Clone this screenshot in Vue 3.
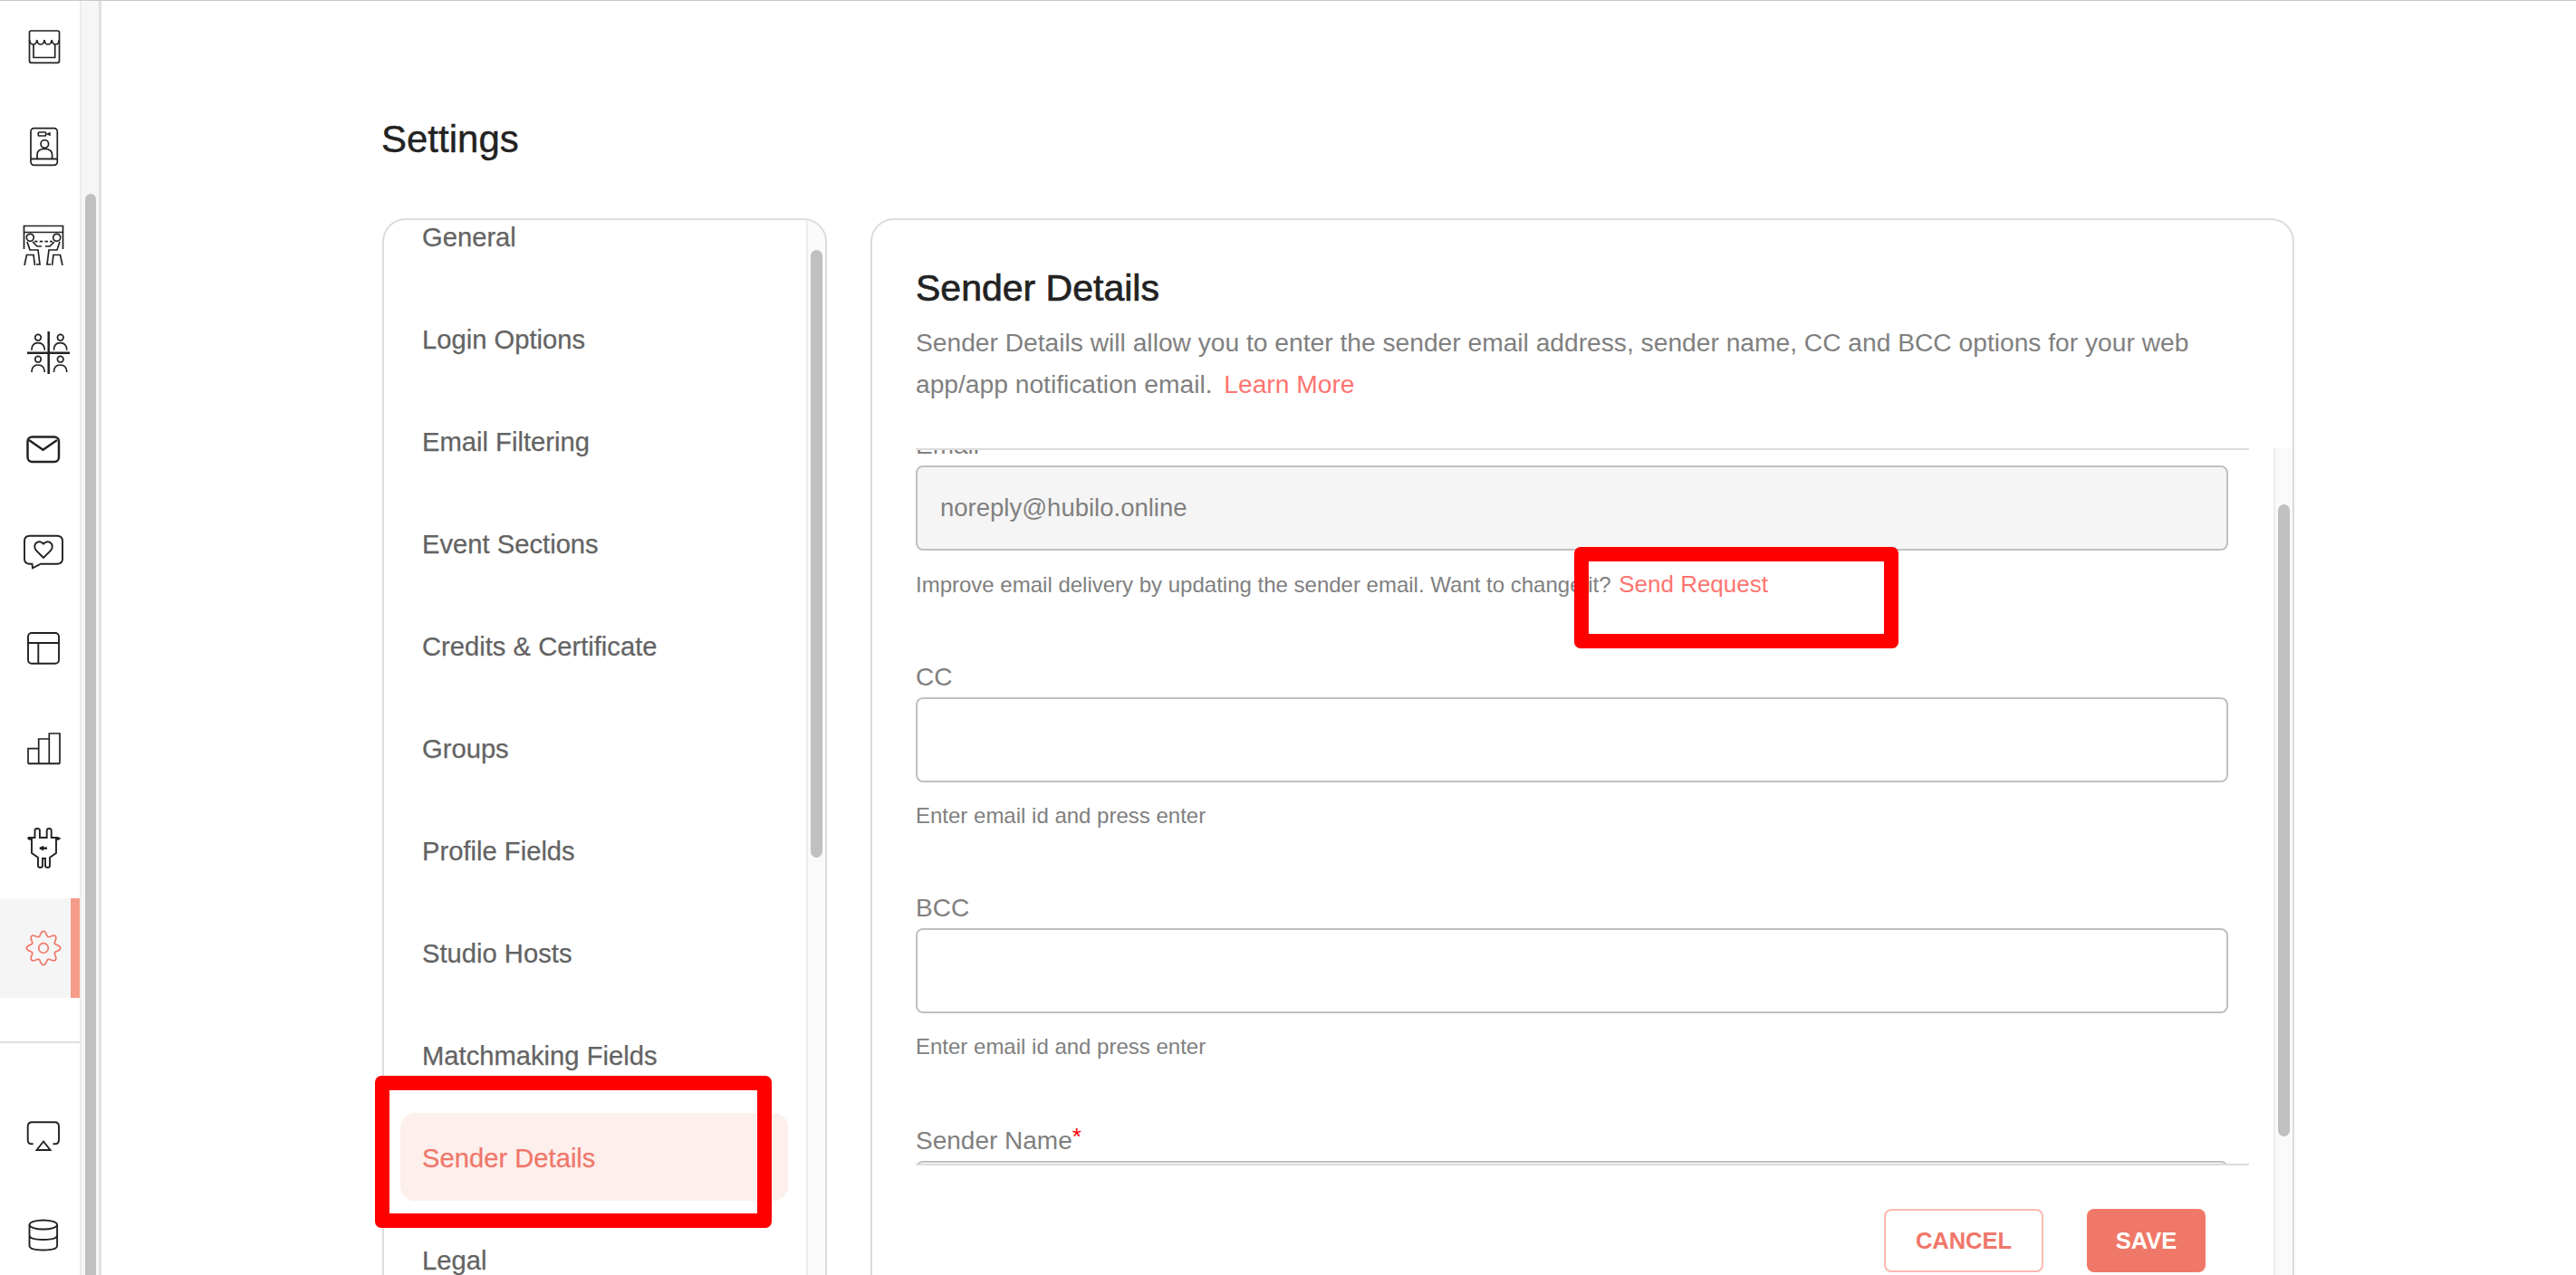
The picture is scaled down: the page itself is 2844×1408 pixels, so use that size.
<script setup>
const menu = ['General','Login Options','Email Filtering','Event Sections','Credits & Certificate','Groups','Profile Fields','Studio Hosts','Matchmaking Fields','Sender Details','Legal']
const cx = 48, cy = 1047
const pts = []
for (let i = 0; i < 96; i++) {
  const t = (i / 96) * Math.PI * 2
  const r = 16 + 2.7 * Math.cos(8 * t)
  pts.push(`${(cx + r * Math.sin(t)).toFixed(2)} ${(cy - r * Math.cos(t)).toFixed(2)}`)
}
const gear = 'M' + pts.join('L') + 'Z'
</script>

<template>
  <div class="page">
    <aside class="rail">
      <div class="rail-col">
        <div class="rail-top">
          <div class="rail-row"><svg class="ic" viewBox="19 27 60 60"><rect x="32.500" y="34" width="33" height="35.300" rx="2"/><path d="M32.500 44q.5 5 4.200 5t4.100-5q.5 5 4.100 5t4.100-5q.5 5 4.100 5t4.100-5q.5 5 4.100 5t4.100-5"/><path d="M37 49V63.500H60.700V49"/></svg></div>
          <div class="rail-row"><svg class="ic" viewBox="19 137 60 60"><rect x="34" y="141.700" width="29.300" height="40.600" rx="3.500"/><path class="mid" d="M34 175.500H63.300"/><path d="M41 175v-4q0-6.500 8.300-6.500t8.300 6.500v4"/><circle cx="49.300" cy="159" r="4.300"/><rect x="42.300" y="146" width="8.400" height="4" rx="1"/><path class="solid" d="M50.700 148l5-2.300v4.600z"/></svg></div>
          <div class="rail-row"><svg class="ic" viewBox="19 247 60 60"><path d="M26.500 275V249.500H69.500V275M26.500 256.500H69.500"/><circle cx="33.300" cy="262.300" r="4"/><circle cx="62.700" cy="262.300" r="4"/><path d="M38 266.700H58" stroke-dasharray="3.500 2.200"/><path d="M30 267l3 9h9l2 16h-4M36 267l5 5h5M27 293l2.500-11.500H37l1.500 11.500"/><path d="M66 267l-3 9h-9l-2 16h4M60 267l-5 5h-5M69 293l-2.500-11.500H59l-1.500 11.500"/></svg></div>
          <div class="rail-row"><svg class="ic" viewBox="19 357 60 60"><path class="thick" d="M53.700 366V413M30 389.700H77"/><circle cx="42" cy="372.700" r="3.300"/><circle cx="66.700" cy="372.700" r="3.300"/><circle cx="42" cy="396.700" r="3.300"/><circle cx="66.700" cy="396.700" r="3.300"/><path d="M35 386.700q0-8 7-8t7.300 8M59.500 386.700q0-8 7-8t7.300 8M35 411q0-8 7-8t7.300 8M59.500 411q0-8 7-8t7.300 8"/></svg></div>
          <div class="rail-row"><svg class="ic" viewBox="19 467 60 60"><rect class="thick" x="30.500" y="482.500" width="34.500" height="27.500" rx="5"/><path class="thick" d="M32 486l15.500 10.700L63 486"/></svg></div>
          <div class="rail-row"><svg class="ic" viewBox="19 577 60 60"><path class="mid" d="M33 591.700H63q6 0 6 6V617q0 5.700-6 5.700H45L36 627.300 35.500 622.700H33q-6 0-6-5.700V597.700q0-6 6-6z"/><path class="mid" d="M48 616l-8-8q-3.500-5 0-8.500 4.500-3 8 1 3.500-4 8-1 3.500 3.500 0 8.500z"/></svg></div>
          <div class="rail-row"><svg class="ic" viewBox="19 687 60 60"><rect class="mid" x="31" y="699" width="34" height="33.700" rx="4"/><path class="mid" d="M31 710H65M42.300 710V732.700"/></svg></div>
          <div class="rail-row"><svg class="ic" viewBox="19 797 60 60"><path d="M31 843.300V826.700H42.700V843.300M42.700 826.700V816H54.300V843.300M54.300 816V810H66V843.300"/><path class="mid" d="M31 843.300H66"/></svg></div>
          <div class="rail-row"><svg class="ic" viewBox="19 907 60 60"><path class="mid" d="M31 925H38.500V917q0-2 2.700-2t2.700 2v8h7.800v-8q0-2 2.500-2t2.500 2v8h8M31 925q0 2 4 2v15l7 5v9q0 2 2.500 2t2.500-2v-8h3v8q0 2 2.500 2t2.500-2v-9l7-5V927q4 0 4-2"/><path class="thick" d="M44 936.700H52"/><path class="solid" d="M43 936.700l5-3v6z"/></svg></div>
          <div class="rail-row active"><svg class="ic gear" viewBox="19 1017 60 60"><path :d="gear"/><circle cx="48" cy="1047" r="5.300"/></svg></div>
        </div>
        <div class="rail-sep"></div>
        <div class="rail-row"><svg class="ic" viewBox="19 1223 60 60"><path class="mid" d="M36.700 1263.300H35q-4.300 0-4.300-4.300V1244q0-4.700 4.700-4.700H60.500q4.500 0 4.500 4.700V1259q0 4.300-4.500 4.300H58.500"/><path class="mid" d="M48 1260.500l-7.500 9.500H55.500z"/></svg></div>
        <div class="rail-row"><svg class="ic" viewBox="19 1334 60 60"><ellipse class="mid" cx="47.800" cy="1353.500" rx="15.300" ry="5"/><path class="mid" d="M32.500 1353.500V1376.500q0 5 15.300 5t15.300-5V1353.500M32.500 1365q0 5 15.300 5t15.300-5"/></svg></div>
      </div>
      <div class="rail-track"><div class="thumb rail-thumb"></div></div>
    </aside>

    <main class="main">
      <h1 class="title">Settings</h1>
      <div class="cards">
        <section class="card side">
          <div class="list-clip">
            <ul class="list">
              <li v-for="m in menu" :key="m" class="item" :class="{ on: m === 'Sender Details' }">{{ m }}</li>
            </ul>
          </div>
          <div class="track"><div class="thumb side-thumb"></div></div>
        </section>

        <section class="card detail">
          <header class="head">
            <h2 class="h2">Sender Details</h2>
            <p class="desc">Sender Details will allow you to enter the sender email address, sender name, CC and BCC options for your web app/app notification email. <a class="link learn">Learn More</a></p>
          </header>
          <div class="body">
            <div class="col">
              <div class="scroller">
                <div class="form">
                  <div class="field first">
                    <label class="lab">Email</label>
                    <div class="inp dis">noreply@hubilo.online</div>
                    <p class="help">Improve email delivery by updating the sender email. Want to change it? <a class="link req-link">Send Request</a></p>
                  </div>
                  <div class="field">
                    <label class="lab">CC</label>
                    <div class="inp"></div>
                    <p class="help">Enter email id and press enter</p>
                  </div>
                  <div class="field">
                    <label class="lab">BCC</label>
                    <div class="inp"></div>
                    <p class="help">Enter email id and press enter</p>
                  </div>
                  <div class="field last">
                    <label class="lab">Sender Name<sup class="req">*</sup></label>
                    <div class="inp"></div>
                  </div>
                </div>
              </div>
              <footer class="foot">
                <button class="btn ghost">CANCEL</button>
                <button class="btn fill">SAVE</button>
              </footer>
            </div>
            <div class="track detail-track"><div class="thumb detail-thumb"></div></div>
          </div>
        </section>
      </div>
    </main>

    <div class="mark mark-a"></div>
    <div class="mark mark-b"></div>
  </div>
</template>

<style>
html, body { margin: 0; overflow: hidden; background: #fff; }
</style>

<style scoped>
* { box-sizing: border-box; }
.page {
  position: relative; width: 2844px; height: 1408px; overflow: hidden; display: flex;
  border-top: 1px solid #c8c8c8; background: #fff;
  font-family: "Liberation Sans", Arial, sans-serif;
}
.rail { width: 112px; flex: none; display: flex; height: 1500px; border-right: 3px solid #e2e2e2; }
.rail-col { width: 88px; flex: none; }
.rail-top { margin-top: 1px; }
.rail-row { height: 110px; display: flex; align-items: center; padding-left: 19px; }
.rail-row.active { background: #f5f5f5; border-right: 10px solid #f59c88; }
.rail-sep { height: 2px; background: #e0e0e0; margin: 48px 0 46px; }
.ic { width: 60px; height: 60px; fill: none; stroke: #222; stroke-width: 1.700; flex: none; }
.ic .mid { stroke-width: 1.900; }
.ic .thick { stroke-width: 2.500; }
.ic .solid { fill: #222; stroke: none; }
.ic.gear { stroke: #f0776a; stroke-width: 1.700; }
.rail-track { flex: 1; background: #f6f6f6; border-left: 2px solid #ececec; padding: 213px 3px 0 4px; }
.thumb { background: #c0c0c0; border-radius: 7px; }
.rail-thumb { height: 1300px; }

.main { flex: 1; padding-left: 309px; min-width: 0; }
.title { margin: 0; padding-top: 129px; height: 240px; font-size: 42px; line-height: 48px; font-weight: 400; color: #222; -webkit-text-stroke: 0.4px #222; }
.cards { display: flex; gap: 48px; align-items: flex-start; margin-left: 1px; }
.card { border: 2px solid #dcdcdc; border-radius: 26px; height: 1300px; overflow: hidden; background: #fff; display: flex; }
.side { width: 491px; }
.detail { width: 1572px; flex-direction: column; }

.list-clip { flex: 1; min-width: 0; overflow: hidden; }
.list { list-style: none; margin: -31px 0 0; padding: 0 20px 0 18px; display: flex; flex-direction: column; gap: 16px; }
.item { height: 97px; display: flex; align-items: center; padding: 3px 0 0 24px; border-radius: 16px; font-size: 29.200px; color: #636363; -webkit-text-stroke: 0.25px #636363; }
.item.on { background: #fdefec; color: #f0776a; -webkit-text-stroke: 0.25px #f0776a; }
.track { width: 21px; flex: none; background: #fafafa; border-left: 2px solid #ececec; padding: 33px 3px 0 3px; }
.side-thumb { height: 671px; }

.head { padding: 51px 0 0 48px; height: 252px; flex: none; }
.h2 { margin: 0; font-size: 41px; line-height: 48px; font-weight: 400; color: #222; -webkit-text-stroke: 0.7px #222; }
.desc { margin: 13px 0 0; width: 1472px; font-size: 28.200px; line-height: 46px; color: #808080; }
.link { color: #ff7470; }
.learn { margin-left: 5px; }
.req-link { font-size: 26px; margin-left: 2px; }

.body { flex: 1; display: flex; min-height: 0; }
.col { width: 1547px; padding: 0 27px 0 48px; flex: none; }
.scroller { height: 792px; border-top: 2px solid #dcdcdc; border-bottom: 2px solid #dcdcdc; overflow: hidden; }
.form { margin-top: -21px; padding-right: 23px; display: flex; flex-direction: column; gap: 72px; }
.field.first { padding-bottom: 1px; }
.field.last { margin-top: 2px; }
.lab { display: block; height: 32px; line-height: 32px; margin-bottom: 6px; font-size: 28px; color: #808080; }
.req { color: #f00; font-size: 26px; line-height: 0; vertical-align: 5px; }
.inp { height: 94px; border: 2px solid #c0c0c0; border-radius: 8px; background: #fff; display: flex; align-items: center; padding-left: 25px; font-size: 27.500px; color: #808080; }
.inp.dis { background: #f5f5f5; }
.help { margin: 23px 0 0; height: 28px; line-height: 28px; font-size: 24px; color: #808080; }
.foot { display: flex; justify-content: flex-end; gap: 48px; padding: 48px 48px 0 0; }
.btn { height: 70px; border-radius: 8px; font: 700 25.500px "Liberation Sans", Arial, sans-serif; padding: 0; }
.ghost { width: 176px; background: #fff; border: 2px solid #fbb8af; color: #f0776a; }
.fill { width: 131px; background: #f07868; border: 0; color: #fff; }
.detail-track { padding-top: 62px; }
.detail-thumb { height: 698px; }

.mark { position: absolute; border: 16px solid #f00; border-radius: 7px; pointer-events: none; }
.mark-a { left: 414px; top: 1187px; width: 438px; height: 168px; }
.mark-b { left: 1738px; top: 603px; width: 358px; height: 112px; }
</style>
